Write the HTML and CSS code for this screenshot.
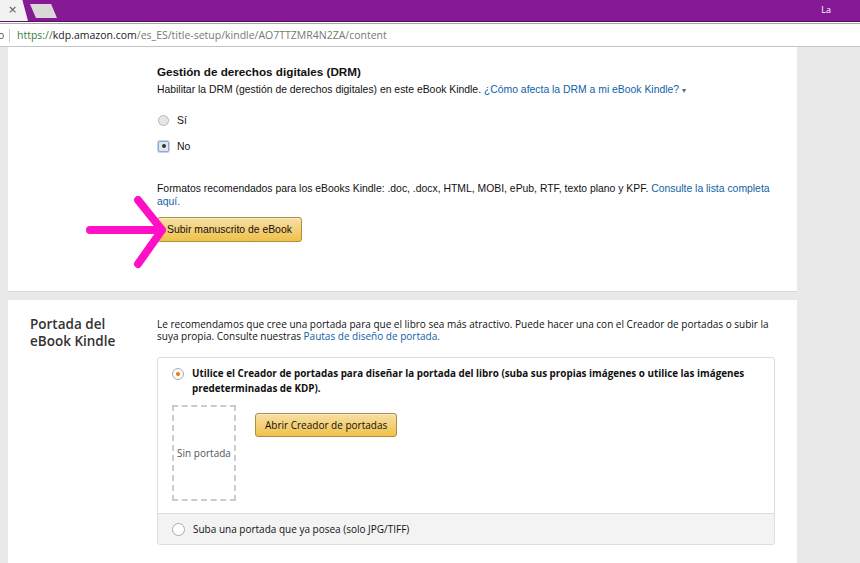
FILE: index.html
```html
<!DOCTYPE html>
<html lang="es">
<head>
<meta charset="utf-8">
<link rel="stylesheet" href="styles.css">
</head>
<body>
<div class="tabbar">
  <div class="tab-active"><span class="tab-close">×</span></div>
  <div class="tab-new"></div>
  <div class="tab-spacer"></div>
  <div class="tab-user">La</div>
</div>
<div class="addressbar">
  <span class="addr-left">o</span>
  <span class="addr-sep"></span>
  <span class="url"><span class="url-scheme">https://</span><span class="url-host">kdp.amazon.com</span><span class="url-path">/es_ES/title-setup/kindle/AO7TTZMR4N2ZA/content</span></span>
</div>
<div class="page">
  <div class="main">
    <section class="card card-top">
      <div class="card-body">
        <h3 class="field-title">Gestión de derechos digitales (DRM)</h3>
        <p class="field-text">Habilitar la DRM (gestión de derechos digitales) en este eBook Kindle. <a class="link">¿Cómo afecta la DRM a mi eBook Kindle?</a> <span class="caret">▾</span></p>
        <div class="radio-list">
          <label class="radio-row"><span class="radio grey"></span>Sí</label>
          <label class="radio-row"><span class="radio checked"></span>No</label>
        </div>
        <p class="formats">Formatos recomendados para los eBooks Kindle: .doc, .docx, HTML, MOBI, ePub, RTF, texto plano y KPF. <a class="link">Consulte la lista completa aquí.</a></p>
        <div class="btn-wrap">
          <button class="btn-yellow btn-upload">Subir manuscrito de eBook</button>
          <svg class="arrow" width="90" height="74" viewBox="0 0 90 74">
            <path d="M4 34 H76 M52 4 L76 34 L52 68" fill="none" stroke="#ff0fc5" stroke-width="8" stroke-linecap="round" stroke-linejoin="round"/>
          </svg>
        </div>
      </div>
    </section>
    <section class="card card-cover">
      <h2 class="cover-heading">Portada del eBook Kindle</h2>
      <div class="cover-content">
        <p class="cover-intro">Le recomendamos que cree una portada para que el libro sea más atractivo. Puede hacer una con el Creador de portadas o subir la suya propia. Consulte nuestras <a class="link">Pautas de diseño de portada.</a></p>
        <div class="option-box">
          <div class="option option-selected">
            <div class="option-head">
              <span class="radio orange"></span>
              <span class="option-title">Utilice el Creador de portadas para diseñar la portada del libro (suba sus propias imágenes o utilice las imágenes predeterminadas de KDP).</span>
            </div>
            <div class="option-body">
              <div class="no-cover">Sin portada</div>
              <button class="btn-yellow btn-creator">Abrir Creador de portadas</button>
            </div>
          </div>
          <div class="option option-alt">
            <span class="radio empty"></span>
            <span class="option-label">Suba una portada que ya posea (solo JPG/TIFF)</span>
          </div>
        </div>
      </div>
    </section>
  </div>
  <div class="sidebar"></div>
</div>
</body>
</html>
```
FILE: styles.css
```css
html, body {
  margin: 0;
  padding: 0;
  height: 563px;
  overflow: hidden;
  font-family: "Open Sans", "Liberation Sans", sans-serif;
  color: #111;
}
.tabbar {
  height: 21px;
  background: #861994;
  display: flex;
  align-items: stretch;
  border-bottom: 1px solid #5c0f67;
}
.tab-active {
  width: 22px;
  background: #f2f2f2;
  clip-path: polygon(0 0, 80% 0, 100% 100%, 0 100%);
  padding-right: 6px;
  display: flex;
  align-items: center;
}
.tab-close {
  font-family: "DejaVu Sans", sans-serif;
  font-size: 11px;
  color: #555;
  margin-left: 8px;
  margin-top: -2px;
}
.tab-new {
  width: 27px;
  height: 14px;
  margin-top: 4px;
  margin-left: 2px;
  background: #d9d9d9;
  clip-path: polygon(0 0, 78% 0, 100% 100%, 22% 100%);
}
.tab-spacer { flex: 1; }
.tab-user {
  color: #fff;
  font-size: 9px;
  line-height: 20px;
  padding-right: 29px;
}
.addressbar {
  height: 22px;
  border-top: 1px solid #a8a8a8;
  border-bottom: 1px solid #c4c4c4;
  margin-top: 1px;
  background: #fff;
  display: flex;
  align-items: center;
  font-size: 10.5px;
}
.addr-left { color: #555; margin-left: -2px; width: 8px; }
.addr-sep { width: 1px; height: 13px; background: #c8c8c8; margin: 0 7px 0 3px; }
.url-scheme { color: #3b7d3b; }
.url-host { color: #222; }
.url-path { color: #777; }
.page {
  background: #e9e9e9;
  display: flex;
  height: 516px;
  padding-left: 8px;
}
.main {
  width: 789px;
  display: flex;
  flex-direction: column;
  gap: 8px;
}
.sidebar { flex: 1; }
.card {
  background: #fff;
}
.card-top {
  height: 244px;
  border-bottom: 1px solid #d6d6d6;
}
.card-body {
  padding: 18px 0 0 149px;
  font-family: "Liberation Sans", sans-serif;
  font-size: 10.4px;
  color: #111;
}
.field-title {
  margin: 0;
  font-size: 11.7px;
  font-weight: bold;
  line-height: 14px;
}
.field-text {
  margin: 4px 0 0;
  line-height: 14px;
}
.link { color: #0f61a8; }
.caret { color: #666; font-size: 8px; }
.radio-list {
  display: flex;
  flex-direction: column;
  gap: 12px;
  margin-top: 15px;
}
.radio-row {
  display: flex;
  align-items: center;
  height: 14px;
  gap: 8px;
  padding-left: 1px;
}
.radio {
  width: 11px;
  height: 11px;
  border-radius: 50%;
  box-sizing: border-box;
  display: inline-block;
  flex: none;
}
.radio.grey {
  border: 1px solid #b5b5b5;
  background: #e6e6e6;
}
.radio.checked {
  border: 1px solid #8fa7c9;
  background: #e2e8f0;
  border-radius: 2px;
  position: relative;
  box-shadow: 0 0 0 1px #c5d3e8;
}
.radio.checked::after {
  content: "";
  position: absolute;
  left: 2.5px; top: 2.5px;
  width: 4px; height: 4px;
  border-radius: 50%;
  background: #333;
}
.formats {
  margin: 28.5px 0 0;
  line-height: 13px;
  width: 620px;
}
.btn-wrap {
  position: relative;
  margin-top: 9.5px;
}
.btn-yellow {
  font-family: "Liberation Sans", sans-serif;
  font-size: 10.4px;
  color: #111;
  border: 1px solid #b08d3a;
  border-radius: 3px;
  background: linear-gradient(#f7dfa5, #f0c14b);
  padding: 0 8px;
  cursor: pointer;
  box-shadow: 0 1px 0 rgba(255,255,255,.4) inset;
}
.btn-upload {
  height: 25px;
  width: 145px;
}
.arrow {
  position: absolute;
  left: -71px;
  top: -21px;
}
.card-cover {
  flex: 1;
  display: flex;
  padding: 16px 0 0 22px;
}
.cover-heading {
  margin: 0;
  width: 127px;
  padding-right: 20px;
  box-sizing: border-box;
  flex: none;
  font-family: "Open Sans", sans-serif;
  font-size: 13.5px;
  font-weight: 600;
  line-height: 17px;
  color: #333;
}
.cover-content {
  width: 618px;
  font-size: 10px;
}
.cover-intro {
  margin: 1.5px 0 0;
  line-height: 12.5px;
  color: #111;
}
.option-box {
  margin-top: 14.5px;
  border: 1px solid #ddd;
  border-radius: 3px;
  overflow: hidden;
}
.option-selected {
  padding: 8px 14px 12px 14px;
}
.option-head {
  display: flex;
  gap: 8px;
  align-items: flex-start;
}
.option-title {
  font-weight: bold;
  font-size: 9.85px;
  line-height: 15px;
  color: #111;
}
.radio.orange {
  margin-top: 2px;
  border: 1px solid #aaa;
  background: #fff;
  position: relative;
  width: 12px; height: 12px;
}
.radio.orange::after {
  content: "";
  position: absolute;
  left: 3px; top: 3px;
  width: 4px; height: 4px;
  border-radius: 50%;
  background: #e47911;
}
.option-body {
  display: flex;
  gap: 19px;
  margin-top: 9px;
}
.no-cover {
  width: 64px;
  height: 96px;
  border: 2px dashed #ccc;
  box-sizing: border-box;
  display: flex;
  align-items: center;
  justify-content: center;
  font-size: 10px;
  color: #555;
  white-space: nowrap;
}
.btn-creator {
  font-family: "Open Sans", sans-serif;
  font-size: 10px;
  height: 24px;
  margin-top: 8px;
  padding: 0 9px;
}
.option-alt {
  background: #f3f3f3;
  border-top: 1px solid #ddd;
  height: 30px;
  display: flex;
  align-items: center;
  gap: 8px;
  padding-left: 14px;
  color: #111;
}
.radio.empty {
  width: 13px; height: 13px;
  border: 1px solid #aaa;
  background: #fff;
}
```
